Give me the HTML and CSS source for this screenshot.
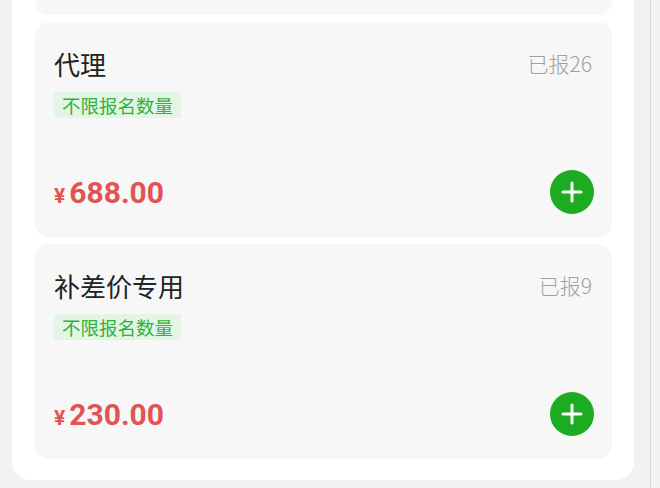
FILE: index.html
```html
<!DOCTYPE html>
<html>
<head>
    <meta charset="UTF-8">
    <link rel="stylesheet" href="styles.css">
</head>
<body>
    <div class="panel">
        <div class="card card-tail"></div>

        <div class="card">
            <div class="head">
                <span class="title">代理</span>
                <span class="count">已报26</span>
            </div>
            <div class="tag">不限报名数量</div>
            <div class="foot">
                <span class="price"><span class="yen">¥</span>688.00</span>
                <button class="add" aria-label="add">
                    <svg width="22" height="22" viewBox="0 0 22 22"><path d="M11 2v18M2 11h18" stroke="#fff" stroke-width="3" stroke-linecap="round"/></svg>
                </button>
            </div>
        </div>

        <div class="card">
            <div class="head">
                <span class="title">补差价专用</span>
                <span class="count">已报9</span>
            </div>
            <div class="tag">不限报名数量</div>
            <div class="foot">
                <span class="price"><span class="yen">¥</span>230.00</span>
                <button class="add" aria-label="add">
                    <svg width="22" height="22" viewBox="0 0 22 22"><path d="M11 2v18M2 11h18" stroke="#fff" stroke-width="3" stroke-linecap="round"/></svg>
                </button>
            </div>
        </div>
    </div>
    <div class="rail"></div>
</body>
</html>
```

FILE: styles.css
```css
body {
    margin: 0;
    padding: 0;
    height: 488px;
    overflow: hidden;
    background-color: #f1f2f4;
    display: flex;
    align-items: flex-start;
    font-family: "Noto Sans CJK SC", "Noto Sans", sans-serif;
}

.panel {
    margin-left: 12px;
    width: 622px;
    box-sizing: border-box;
    padding: 0 22px 21px 23px;
    background-color: #fff;
    border-radius: 0 0 18px 18px;
    display: flex;
    flex-direction: column;
    gap: 7px;
}

.rail {
    margin-left: 16px;
    width: 1px;
    height: 488px;
    background-color: #d6d8db;
}

.card {
    background-color: #f7f7f7;
    border-radius: 14px;
    height: 215px;
    box-sizing: border-box;
    padding: 26px 20px 23px 19px;
    display: flex;
    flex-direction: column;
    align-items: flex-start;
}

.card-tail {
    height: 15px;
    padding: 0;
    border-radius: 0 0 14px 14px;
}

.head {
    align-self: stretch;
    display: flex;
    justify-content: space-between;
    align-items: center;
    height: 30px;
}

.title {
    font-size: 26px;
    color: #222;
}

.count {
    font-size: 21px;
    font-weight: 300;
    color: #a0a0a0;
}

.tag {
    margin-top: 14px;
    height: 26px;
    line-height: 26px;
    padding: 0 8px;
    font-size: 18.5px;
    color: #2eb33a;
    background-color: #e3f5e4;
    border-radius: 3px;
}

.foot {
    margin-top: auto;
    align-self: stretch;
    display: flex;
    justify-content: space-between;
    align-items: center;
    height: 44px;
}

.price {
    font-family: Roboto, "Liberation Sans", sans-serif;
    font-weight: bold;
    font-size: 30px;
    color: #e25454;
}

.yen {
    font-size: 21px;
    margin-right: 4px;
}

.add {
    width: 44px;
    height: 44px;
    margin-right: -2px;
    border: none;
    border-radius: 50%;
    padding: 0;
    background-color: #1cac22;
    display: flex;
    align-items: center;
    justify-content: center;
}
```
